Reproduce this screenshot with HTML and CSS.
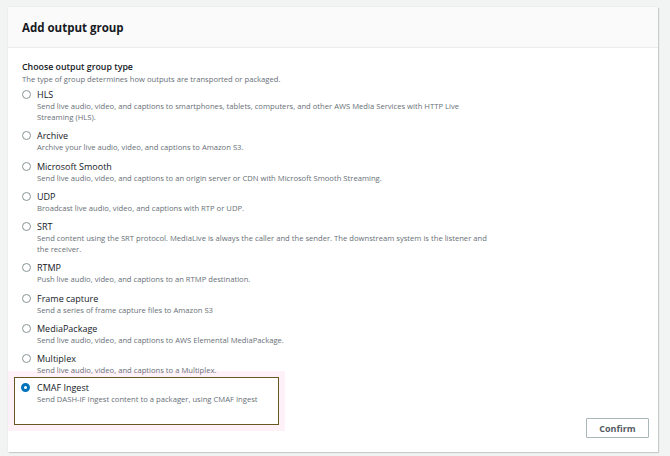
FILE: index.html
```html
<!DOCTYPE html>
<html lang="en">
<head>
<meta charset="utf-8">
<title>Add output group</title>
<link rel="stylesheet" href="styles.css">
</head>
<body>
<div class="card">
  <div class="card-header"><h2 class="title">Add output group</h2></div>
  <div class="card-body">
    <div class="field-label">Choose output group type</div>
    <div class="field-desc">The type of group determines how outputs are transported or packaged.</div>
    <div class="options">
      <div class="option"><span class="radio"></span><div class="opt-text"><div class="opt-label">HLS</div><div class="opt-desc">Send live audio, video, and captions to smartphones, tablets, computers, and other AWS Media Services with HTTP Live Streaming (HLS).</div></div></div>
      <div class="option"><span class="radio"></span><div class="opt-text"><div class="opt-label">Archive</div><div class="opt-desc">Archive your live audio, video, and captions to Amazon S3.</div></div></div>
      <div class="option"><span class="radio"></span><div class="opt-text"><div class="opt-label">Microsoft Smooth</div><div class="opt-desc">Send live audio, video, and captions to an origin server or CDN with Microsoft Smooth Streaming.</div></div></div>
      <div class="option"><span class="radio"></span><div class="opt-text"><div class="opt-label">UDP</div><div class="opt-desc">Broadcast live audio, video, and captions with RTP or UDP.</div></div></div>
      <div class="option"><span class="radio"></span><div class="opt-text"><div class="opt-label">SRT</div><div class="opt-desc">Send content using the SRT protocol. MediaLive is always the caller and the sender. The downstream system is the listener and the receiver.</div></div></div>
      <div class="option"><span class="radio"></span><div class="opt-text"><div class="opt-label">RTMP</div><div class="opt-desc">Push live audio, video, and captions to an RTMP destination.</div></div></div>
      <div class="option"><span class="radio"></span><div class="opt-text"><div class="opt-label">Frame capture</div><div class="opt-desc">Send a series of frame capture files to Amazon S3</div></div></div>
      <div class="option"><span class="radio"></span><div class="opt-text"><div class="opt-label">MediaPackage</div><div class="opt-desc">Send live audio, video, and captions to AWS Elemental MediaPackage.</div></div></div>
      <div class="option"><span class="radio"></span><div class="opt-text"><div class="opt-label">Multiplex</div><div class="opt-desc">Send live audio, video, and captions to a Multiplex.</div></div></div>
      <div class="option selected"><span class="radio checked"></span><div class="opt-text"><div class="opt-label">CMAF Ingest</div><div class="opt-desc">Send DASH-IF Ingest content to a packager, using CMAF Ingest</div></div></div>
    </div>
  </div>
  <div class="card-footer"><button class="btn">Confirm</button></div>
</div>
</body>
</html>
```
FILE: styles.css
```css
* { box-sizing: border-box; }
html, body { margin: 0; padding: 0; }
body {
  background: #f2f3f3;
  font-family: "Open Sans", "Noto Sans", sans-serif;
  color: #16191f;
  padding: 7px 12px 4px 8px;
}
.card {
  width: 650px;
  height: 445px;
  background: #ffffff;
  box-shadow: 1px 1px 1px rgba(0,0,0,0.15), 0 0 1px rgba(0,0,0,0.12);
  display: flex;
  flex-direction: column;
}
.card-header {
  flex: none;
  height: 41px;
  background: #fafafa;
  border-bottom: 1px solid #eaeded;
  display: flex;
  align-items: center;
  padding: 0 14px;
}
.title {
  margin: 0;
  font-size: 11.5px;
  font-weight: 700;
  color: #16191f;
}
.card-body {
  flex: 1;
  min-height: 0;
  padding: 13px 14px 0 14px;
}
.field-label {
  font-size: 8.8px;
  font-weight: 600;
  line-height: 13px;
}
.field-desc {
  font-size: 7.65px;
  line-height: 11px;
  color: #687078;
  margin-bottom: 3px;
}
.options {
  display: flex;
  flex-direction: column;
  gap: 6px;
}
.option {
  display: flex;
  align-items: flex-start;
  gap: 6px;
}
.radio {
  flex: none;
  width: 9px;
  height: 9px;
  border-radius: 50%;
  border: 1px solid #879596;
  margin-top: 2px;
  background: #fff;
}
.radio.checked {
  border: 3px solid #0073bb;
}
.opt-text { width: 460px; }
.opt-label {
  font-size: 9px;
  line-height: 13px;
  color: #16191f;
}
.opt-desc {
  font-size: 7.65px;
  line-height: 11.2px;
  color: #687078;
}
.option.selected {
  margin-top: -5px;
  margin-left: -8px;
  width: 265px;
  border: 1.5px solid #6b5622;
  padding: 3px 0 19px 6px;
  box-shadow: 0 0 0 6px rgba(236, 72, 153, 0.07);
  gap: 7px;
}
.card-footer {
  flex: none;
  display: flex;
  justify-content: flex-end;
  padding: 0 9px 14px 0;
}
.btn {
  width: 63px;
  height: 20px;
  background: #fff;
  border: 1px solid #aab7b8;
  border-radius: 1px;
  font-family: "Open Sans", "Noto Sans", sans-serif;
  font-size: 9px;
  font-weight: 700;
  color: #545b64;
  padding: 0;
}
```
